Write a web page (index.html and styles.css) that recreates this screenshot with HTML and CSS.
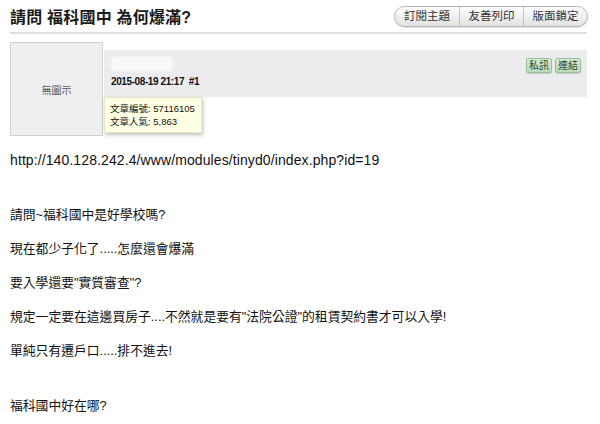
FILE: index.html
```html
<!DOCTYPE html>
<html lang="zh-Hant">

<head>
    <meta charset="UTF-8">
    <meta name="viewport" content="width=device-width, initial-scale=1.0">
    <title>請問 福科國中 為何爆滿?</title>
    <link rel="stylesheet" href="styles.css">
</head>

<body>
    <div class="page">
        <div class="topic-head">
            <h1 class="topic-title">請問 福科國中 為何爆滿?</h1>
            <div class="topic-tools">
                <a href="#">訂閱主題</a><a href="#">友善列印</a><a href="#">版面鎖定</a>
            </div>
        </div>

        <div class="post">
            <div class="post-top">
                <div class="avatar">無圖示</div>
                <div class="post-bar">
                    <div class="post-meta">
                        <div class="name-blur"></div>
                        <div class="post-date">2015-08-19 21:17&nbsp;&nbsp;#1</div>
                    </div>
                    <div class="post-actions">
                        <a href="#">私訊</a><a href="#">連結</a>
                    </div>
                </div>
                <!-- 滑鼠移上去時的提示 -->
                <div class="post-tip">文章編號: 57116105<br>文章人氣: 5,863</div>
            </div>

            <div class="post-body">
                <p class="url">http://140.128.242.4/www/modules/tinyd0/index.php?id=19</p>
                <div class="blank"></div>
                <p>請問~福科國中是好學校嗎?</p>
                <p>現在都少子化了.....怎麼還會爆滿</p>
                <p>要入學還要"實質審查"?</p>
                <p>規定一定要在這邊買房子....不然就是要有"法院公證"的租賃契約書才可以入學!</p>
                <p>單純只有遷戶口.....排不進去!</p>
                <div class="blank"></div>
                <p>福科國中好在哪?</p>
            </div>
        </div>
    </div>
</body>

</html>
```

FILE: styles.css
```css
body {
    font-family: "Liberation Sans", "Noto Sans CJK TC", sans-serif;
    margin: 0;
    padding: 0;
    background-color: #fff;
    color: #111;
}

.page {
    width: 577px;
    margin-left: 10px;
}

.topic-head {
    display: flex;
    justify-content: space-between;
    align-items: flex-start;
    height: 32px;
    border-bottom: 2px solid #dedede;
}

.topic-title {
    margin: 0;
    padding-top: 8px;
    font-size: 16px;
    line-height: 20px;
    font-weight: bold;
    color: #1a1a1a;
    letter-spacing: 0.2px;
}

.topic-tools {
    display: flex;
    margin-top: 6px;
    margin-right: -1px;
    border: 1px solid #b5b5b5;
    border-radius: 11px;
    overflow: hidden;
    background: linear-gradient(#fdfdfd, #e2e2e2);
    box-shadow: 0 1px 1px rgba(0, 0, 0, 0.12);
}

.topic-tools a {
    display: block;
    width: 63px;
    height: 19px;
    line-height: 19px;
    text-align: center;
    font-size: 11.5px;
    color: #333;
    text-decoration: none;
    border-left: 1px solid #c6c6c6;
}

.topic-tools a:first-child {
    border-left: none;
    width: 64px;
}

.post-top {
    position: relative;
    display: flex;
    margin-top: 8px;
}

.avatar {
    width: 91px;
    height: 92px;
    border: 1px solid #cfcfcf;
    background-color: #efeff1;
    display: flex;
    align-items: center;
    justify-content: center;
    font-size: 10px;
    color: #555;
}

.post-bar {
    flex: 1;
    display: flex;
    justify-content: space-between;
    margin-top: 8px;
    margin-left: 1px;
    height: 47px;
    background-color: #ececee;
    padding: 0 6px 0 7px;
}

.post-meta {
    display: flex;
    flex-direction: column;
}

.name-blur {
    width: 62px;
    height: 14px;
    margin-top: 7px;
    background-color: #fafafa;
    background-image: repeating-linear-gradient(90deg, #e2e2e2 0 3px, transparent 3px 5px);
    background-size: 100% 1px;
    background-repeat: no-repeat;
    background-position: 0 4px;
    filter: blur(1.5px);
    border-radius: 4px;
}

.post-date {
    margin-top: 4px;
    font-size: 10px;
    font-weight: bold;
    line-height: 14px;
    color: #111;
    letter-spacing: -0.4px;
}

.post-actions {
    display: flex;
    gap: 3px;
    margin-top: 8px;
}

.post-actions a {
    display: block;
    height: 13px;
    line-height: 13px;
    padding: 0 2px;
    font-size: 10px;
    color: #2e4a2e;
    text-decoration: none;
    background: linear-gradient(#d6ebd6, #b9d9b9);
    border: 1px solid #96c196;
    border-radius: 2px;
    box-shadow: 0 1px 1px rgba(0, 0, 0, 0.15);
}

.post-tip {
    position: absolute;
    left: 94px;
    top: 55px;
    padding: 4px 6px 4px 5px;
    font-size: 9.5px;
    line-height: 13px;
    color: #111;
    background-color: #ffffe3;
    border: 1px solid #e5e5c8;
    box-shadow: 1px 2px 4px rgba(0, 0, 0, 0.25);
}

.post-body {
    margin-top: 13px;
}

.post-body p {
    margin: 0 0 12px;
    font-size: 12.8px;
    line-height: 22px;
}

.post-body .url {
    font-size: 14px;
    letter-spacing: 0.1px;
}

.post-body .blank {
    height: 21px;
}
```
